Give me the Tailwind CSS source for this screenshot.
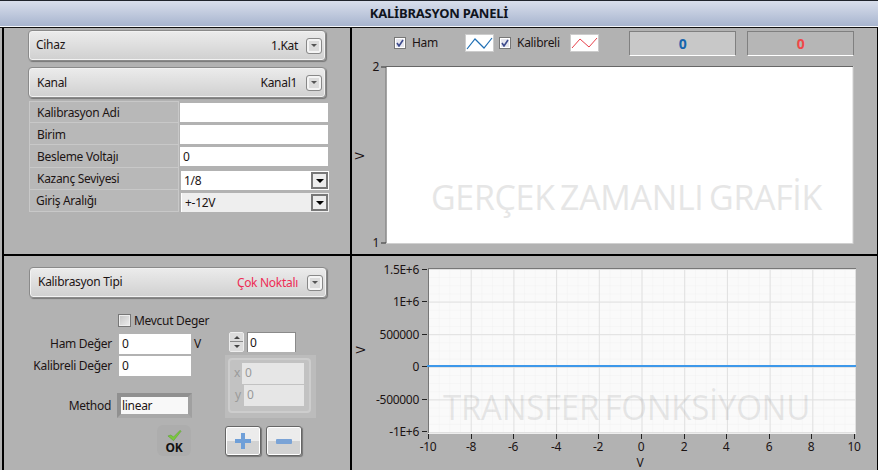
<!DOCTYPE html>
<html lang="en">
  <head>
    <meta charset="UTF-8" />
    <title>Kalibrasyon Paneli</title>
    <script src="https://cdn.jsdelivr.net/npm/@tailwindcss/browser@4"></script>
  </head>
  <body class="w-[878px] h-[470px] overflow-hidden bg-[#b2b2b2] text-[#1c1414] text-[12px] tracking-[-0.3px] font-['Noto_Sans',sans-serif]">
    <!-- title bar -->
    <div class="h-[27px] border-t border-[#20242c] border-b border-b-[#f4f6fa] bg-gradient-to-b from-[#d9dfec] to-[#a8b5cf] flex items-center justify-center font-bold text-[13px] tracking-[-0.2px] text-[#10141c]">
      KALİBRASYON PANELİ
    </div>

    <div class="grid grid-cols-[352px_526px] grid-rows-[228px_215px] h-[443px] border-t border-[#111]">
      <!-- channel settings -->
      <div class="border-l-2 border-l-black ml-[2px] border-b-2 border-b-black border-r-2 border-r-black w-[350px] pl-[24px] pt-[2px]">
        <div class="h-[31px] w-[298px] rounded-[4px] border border-[#8a8a8a] bg-gradient-to-b from-[#ececec] to-[#d0d0d0] shadow-[inset_0_0_0_1px_#f2f2f2,1px_1px_1px_#777] flex items-center pl-[7px] pr-[4px]">
          <span class="flex-1 pb-[2px]">Cihaz</span>
          <span class="mr-[9px]">1.Kat</span>
          <span class="w-[14px] h-[14px] rounded-[2px] border-2 border-[#f4f4f4] bg-[#dcdcdc] outline outline-[#888] flex items-center justify-center">
            <span class="border-x-[3px] border-x-transparent border-t-[3px] border-t-[#555]"></span>
          </span>
        </div>
        <div class="h-[31px] w-[298px] mt-[6px] rounded-[4px] border border-[#8a8a8a] bg-gradient-to-b from-[#ececec] to-[#d0d0d0] shadow-[inset_0_0_0_1px_#f2f2f2,1px_1px_1px_#777] flex items-center pl-[8px] pr-[4px]">
          <span class="flex-1">Kanal</span>
          <span class="mr-[10px]">Kanal1</span>
          <span class="w-[14px] h-[14px] rounded-[2px] border-2 border-[#f4f4f4] bg-[#dcdcdc] outline outline-[#888] flex items-center justify-center">
            <span class="border-x-[3px] border-x-transparent border-t-[3px] border-t-[#555]"></span>
          </span>
        </div>

        <div class="mt-[3px] ml-[1px] w-[300px]">
          <div class="flex h-[22px]">
            <div class="w-[150px] border border-[#c8c8c8] bg-[#b8b8b8] pl-[7px] leading-[22px]">Kalibrasyon Adi</div>
            <div class="ml-[1px] mt-[2px] h-[19px] w-[148px] bg-white"></div>
          </div>
          <div class="flex h-[22px]">
            <div class="w-[150px] border border-t-0 border-[#c8c8c8] bg-[#b8b8b8] pl-[7px] leading-[23px]">Birim</div>
            <div class="ml-[1px] mt-[2px] h-[19px] w-[148px] bg-white"></div>
          </div>
          <div class="flex h-[23px]">
            <div class="w-[150px] border border-t-0 border-[#c8c8c8] bg-[#b8b8b8] pl-[7px] leading-[24px]">Besleme Voltajı</div>
            <div class="ml-[1px] mt-[2px] h-[19px] w-[148px] bg-white pl-[3px] leading-[19px]">0</div>
          </div>
          <div class="flex h-[22px]">
            <div class="w-[150px] border border-t-0 border-[#c8c8c8] bg-[#b8b8b8] pl-[7px] leading-[22px]">Kazanç Seviyesi</div>
            <div class="ml-[2px] mt-[3px] h-[19px] w-[148px] bg-white pl-[3px] leading-[19px] flex justify-between">
              1/8
              <span class="w-[17px] h-[17px] mt-[1px] mr-px border-2 border-[#777] bg-[#ececec] flex items-center justify-center">
                <span class="border-x-[4px] border-x-transparent border-t-[4px] border-t-black"></span>
              </span>
            </div>
          </div>
          <div class="flex h-[22px]">
            <div class="w-[150px] border border-t-0 border-[#c8c8c8] bg-[#b8b8b8] pl-[6px] leading-[22px]">Giriş Aralığı</div>
            <div class="ml-[2px] mt-[3px] h-[19px] w-[148px] bg-[#eeeeee] border-l border-white pl-[3px] leading-[19px] flex justify-between">
              +-12V
              <span class="w-[17px] h-[17px] mt-[1px] mr-px border-2 border-[#777] bg-[#ececec] flex items-center justify-center">
                <span class="border-x-[4px] border-x-transparent border-t-[4px] border-t-black"></span>
              </span>
            </div>
          </div>
        </div>
      </div>

      <!-- realtime graph -->
      <div class="border-b-2 border-b-black border-r border-r-black relative">
        <div class="h-[30px] flex items-center text-[12px]">
          <span class="ml-[42px] w-[12px] h-[12px] border border-[#777] bg-[#e6e6ee] shadow-[inset_0_0_0_1px_#fff] flex items-center justify-center">
            <svg width="8" height="8" viewBox="0 0 8 8"><path d="M1 4 L3 7 L7 1" fill="none" stroke="#3c4a8c" stroke-width="1.6" /></svg>
          </span>
          <span class="ml-[6px] w-[53px]">Ham</span>
          <span class="w-[29px] h-[18px] bg-white border border-[#ccc]">
            <svg width="27" height="16" viewBox="0 0 27 16"><path d="M1 14 L9 4 L18 13 L26 3" fill="none" stroke="#1f6fb4" stroke-width="1.2" /></svg>
          </span>
          <span class="ml-[5px] w-[12px] h-[12px] border border-[#777] bg-[#e6e6ee] shadow-[inset_0_0_0_1px_#fff] flex items-center justify-center">
            <svg width="8" height="8" viewBox="0 0 8 8"><path d="M1 4 L3 7 L7 1" fill="none" stroke="#3c4a8c" stroke-width="1.6" /></svg>
          </span>
          <span class="ml-[6px] w-[53px]">Kalibreli</span>
          <span class="w-[29px] h-[18px] bg-white border border-[#ccc]">
            <svg width="27" height="16" viewBox="0 0 27 16"><path d="M1 13 L9 4 L18 12 L26 3" fill="none" stroke="#e8404a" /></svg>
          </span>
          <span class="ml-[30px] w-[107px] h-[25px] bg-[#c8c8c8] border border-[#808080] border-b-white text-center font-bold text-[14px] leading-[23px] text-[#1565ad]">0</span>
          <span class="ml-[11px] w-[107px] h-[25px] bg-[#b6b6b6] border border-[#808080] border-b-white text-center font-bold text-[14px] leading-[23px] text-[#f04848]">0</span>
        </div>
        <svg class="block" width="525" height="196" viewBox="352 58 525 196" font-size="12" fill="#1c1414">
          <rect x="386" y="66.5" width="467" height="177" fill="#fff" stroke="#d0d0d0" />
          <path d="M386 66.5H853M386 66.5V243" stroke="#666" fill="none" />
          <path d="M381 67H386M381 243H386" stroke="#333" />
          <text x="379" y="71" text-anchor="end">2</text>
          <text x="379" y="247" text-anchor="end">1</text>
          <text transform="translate(364 156) rotate(-90)" text-anchor="middle">V</text>
          <text x="431" y="210" font-size="34" word-spacing="-3" fill="#e6e6e6" font-family="Open Sans" textLength="391" lengthAdjust="spacingAndGlyphs">GERÇEK ZAMANLI GRAFİK</text>
        </svg>
      </div>

      <!-- calibration form -->
      <div class="border-l-2 border-l-black ml-[2px] border-r-2 border-r-black w-[350px] pl-[25px] pt-[11px]">
        <div class="h-[31px] w-[298px] rounded-[4px] border border-[#8a8a8a] bg-gradient-to-b from-[#ececec] to-[#d0d0d0] shadow-[inset_0_0_0_1px_#f2f2f2,1px_1px_1px_#777] flex items-center pl-[8px] pr-[4px]">
          <span class="flex-1 pb-[2px]">Kalibrasyon Tipi</span>
          <span class="mr-[10px] text-[#ee2c55]">Çok Noktalı</span>
          <span class="w-[14px] h-[14px] rounded-[2px] border-2 border-[#f4f4f4] bg-[#dcdcdc] outline outline-[#888] flex items-center justify-center">
            <span class="border-x-[3px] border-x-transparent border-t-[3px] border-t-[#555]"></span>
          </span>
        </div>

        <div class="flex -ml-[25px] mt-[16px]">
          <div class="w-[221px]">
            <div class="h-[13px] pl-[114px] flex items-center">
              <span class="w-[13px] h-[13px] border border-[#777] bg-gradient-to-br from-[#c4c4c4] to-[#eee] shadow-[inset_0_0_0_1px_#eee]"></span>
              <span class="ml-[3px]">Mevcut Deger</span>
            </div>
            <div class="mt-[7px] h-[20px] flex items-center">
              <span class="w-[108px] text-right">Ham Değer</span>
              <span class="ml-[7px] w-[72px] h-[20px] bg-white pl-[3px] leading-[20px]">0</span>
              <span class="ml-[3px]">V</span>
            </div>
            <div class="mt-[2px] h-[20px] flex items-center">
              <span class="w-[108px] text-right whitespace-nowrap">Kalibreli Değer</span>
              <span class="ml-[7px] w-[72px] h-[20px] bg-white pl-[3px] leading-[20px]">0</span>
            </div>
            <div class="mt-[17px] h-[25px] flex items-center">
              <span class="w-[107px] text-right">Method</span>
              <span class="ml-[6px] w-[75px] h-[25px] bg-[#f8f8f8] border-[4px] border-[#909090] border-r-[#a0a0a0] border-b-[#a8a8a8] leading-[17px] pl-[1px]">linear</span>
            </div>
            <div class="mt-[7px] ml-[153px] w-[34px] h-[31px] rounded-[6px] bg-[#adadad] flex flex-col items-center font-bold text-[12px] text-[#111] leading-[14px]">
              <svg width="15" height="13" viewBox="0 0 16 13" class="mt-[4px]"><path d="M1 7 L4 6 L7 8 L14 1 L15 2 L7 12 Z" fill="#7cc83c" stroke="#4f9a2a" stroke-width=".5" /></svg>
              <span class="mt-[-1px]">OK</span>
            </div>
          </div>

          <div class="mt-[18px]">
            <div class="flex ml-[4px] h-[20px]">
              <span class="w-[15px] h-[20px] rounded-[2px] border border-[#eee] bg-[#cfcfcf] flex flex-col">
                <span class="h-[9px] flex items-center justify-center bg-[#dcdcdc] border-b border-[#888]"><span class="border-x-[3px] border-x-transparent border-b-[3px] border-b-[#444]"></span></span>
                <span class="h-[9px] flex items-center justify-center bg-[#dcdcdc]"><span class="border-x-[3px] border-x-transparent border-t-[3px] border-t-[#444]"></span></span>
              </span>
              <span class="ml-[3px] w-[49px] h-[20px] bg-white border-t border-l border-r border-[#8a8a8a] pl-[2px] leading-[20px]">0</span>
            </div>
            <div class="mt-[3px] w-[91px] h-[63px] bg-[#bcbcbc] p-[3px]">
              <div class="w-[83px] h-[55px] rounded-[4px] border-2 border-[#cdcdcd] bg-[#c2c2c2] text-[#9a9a9a] pl-[2px] pt-[2px]">
                <div class="flex h-[22px] items-center">
                  <span class="w-[10px] text-center">x</span>
                  <span class="w-[62px] h-[21px] bg-[#e6e6e6] pl-[3px] leading-[20px]">0</span>
                </div>
                <div class="flex h-[22px] items-center">
                  <span class="w-[12px] text-center">y</span>
                  <span class="w-[60px] h-[21px] bg-[#e6e6e6] pl-[3px] leading-[20px]">0</span>
                </div>
              </div>
            </div>
            <div class="mt-[8px] flex gap-[5px]">
              <span class="w-[36px] h-[30px] rounded-[3px] border border-[#666] shadow-[inset_0_0_0_1px_#fff,1px_1px_1px_#777] bg-gradient-to-b from-[#ececec] from-50% to-[#d2d2d2] to-50% flex items-center justify-center">
                <svg width="16" height="16" viewBox="0 0 16 16"><path d="M6 0H10V6H16V10H10V16H6V10H0V6H6Z" fill="#6f9fd8" /></svg>
              </span>
              <span class="w-[36px] h-[30px] rounded-[3px] border border-[#666] shadow-[inset_0_0_0_1px_#fff,1px_1px_1px_#777] bg-gradient-to-b from-[#ececec] from-50% to-[#d2d2d2] to-50% flex items-center justify-center">
                <svg width="16" height="5" viewBox="0 0 16 5"><rect width="16" height="5" rx="1" fill="#7aa3d6" /></svg>
              </span>
            </div>
          </div>
        </div>
      </div>

      <!-- transfer function graph -->
      <div class="border-r border-r-black">
        <svg class="block" width="525" height="214" viewBox="352 256 525 214" font-size="12" fill="#1c1414">
          <defs>
            <pattern id="minor" x="428" y="269" width="10.68" height="8.15" patternUnits="userSpaceOnUse">
              <path d="M0 0V8.15M0 0H10.68" stroke="#f1f1f1" />
            </pattern>
            <pattern id="major" x="428" y="269" width="42.7" height="32.6" patternUnits="userSpaceOnUse">
              <path d="M.5 0V32.6M0 .5H42.7" stroke="#e0e0e0" />
            </pattern>
          </defs>
          <rect x="428" y="268" width="428" height="165" fill="#fafafa" />
          <rect x="428" y="268" width="428" height="165" fill="url(#minor)" />
          <rect x="428" y="268" width="428" height="165" fill="url(#major)" />
          <path d="M428 268.5H856M428.5 268V433" stroke="#777" fill="none" />
          <path d="M428 433.5H856" stroke="#eee" />
          <path d="M427 366H856" stroke="#3d98ea" stroke-width="2" />
          <path d="M422 269.5H427M422 301.5H427M422 334.5H427M422 366.5H427M422 399.5H427M422 431.5H427" stroke="#222" />
          <path d="M428.5 434V439M471.5 434V439M513.5 434V439M556.5 434V439M598.5 434V439M641.5 434V439M684.5 434V439M726.5 434V439M769.5 434V439M811.5 434V439M854.5 434V439" stroke="#222" />
          <g text-anchor="end">
            <text x="419" y="274">1.5E+6</text>
            <text x="419" y="306">1E+6</text>
            <text x="419" y="339">500000</text>
            <text x="419" y="371">0</text>
            <text x="419" y="404">-500000</text>
            <text x="419" y="436">-1E+6</text>
          </g>
          <g text-anchor="middle">
            <text x="428" y="451">-10</text>
            <text x="471" y="451">-8</text>
            <text x="513" y="451">-6</text>
            <text x="556" y="451">-4</text>
            <text x="598" y="451">-2</text>
            <text x="641" y="451">0</text>
            <text x="684" y="451">2</text>
            <text x="726" y="451">4</text>
            <text x="769" y="451">6</text>
            <text x="811" y="451">8</text>
            <text x="854" y="451">10</text>
            <text x="640" y="467">V</text>
          </g>
          <text transform="translate(365 350) rotate(-90)" text-anchor="middle">V</text>
          <text x="443" y="420" font-size="34" word-spacing="-3" fill="#9a9a9a" fill-opacity=".22" font-family="Open Sans" textLength="367" lengthAdjust="spacingAndGlyphs">TRANSFER FONKSİYONU</text>
        </svg>
      </div>
    </div>
  </body>
</html>
